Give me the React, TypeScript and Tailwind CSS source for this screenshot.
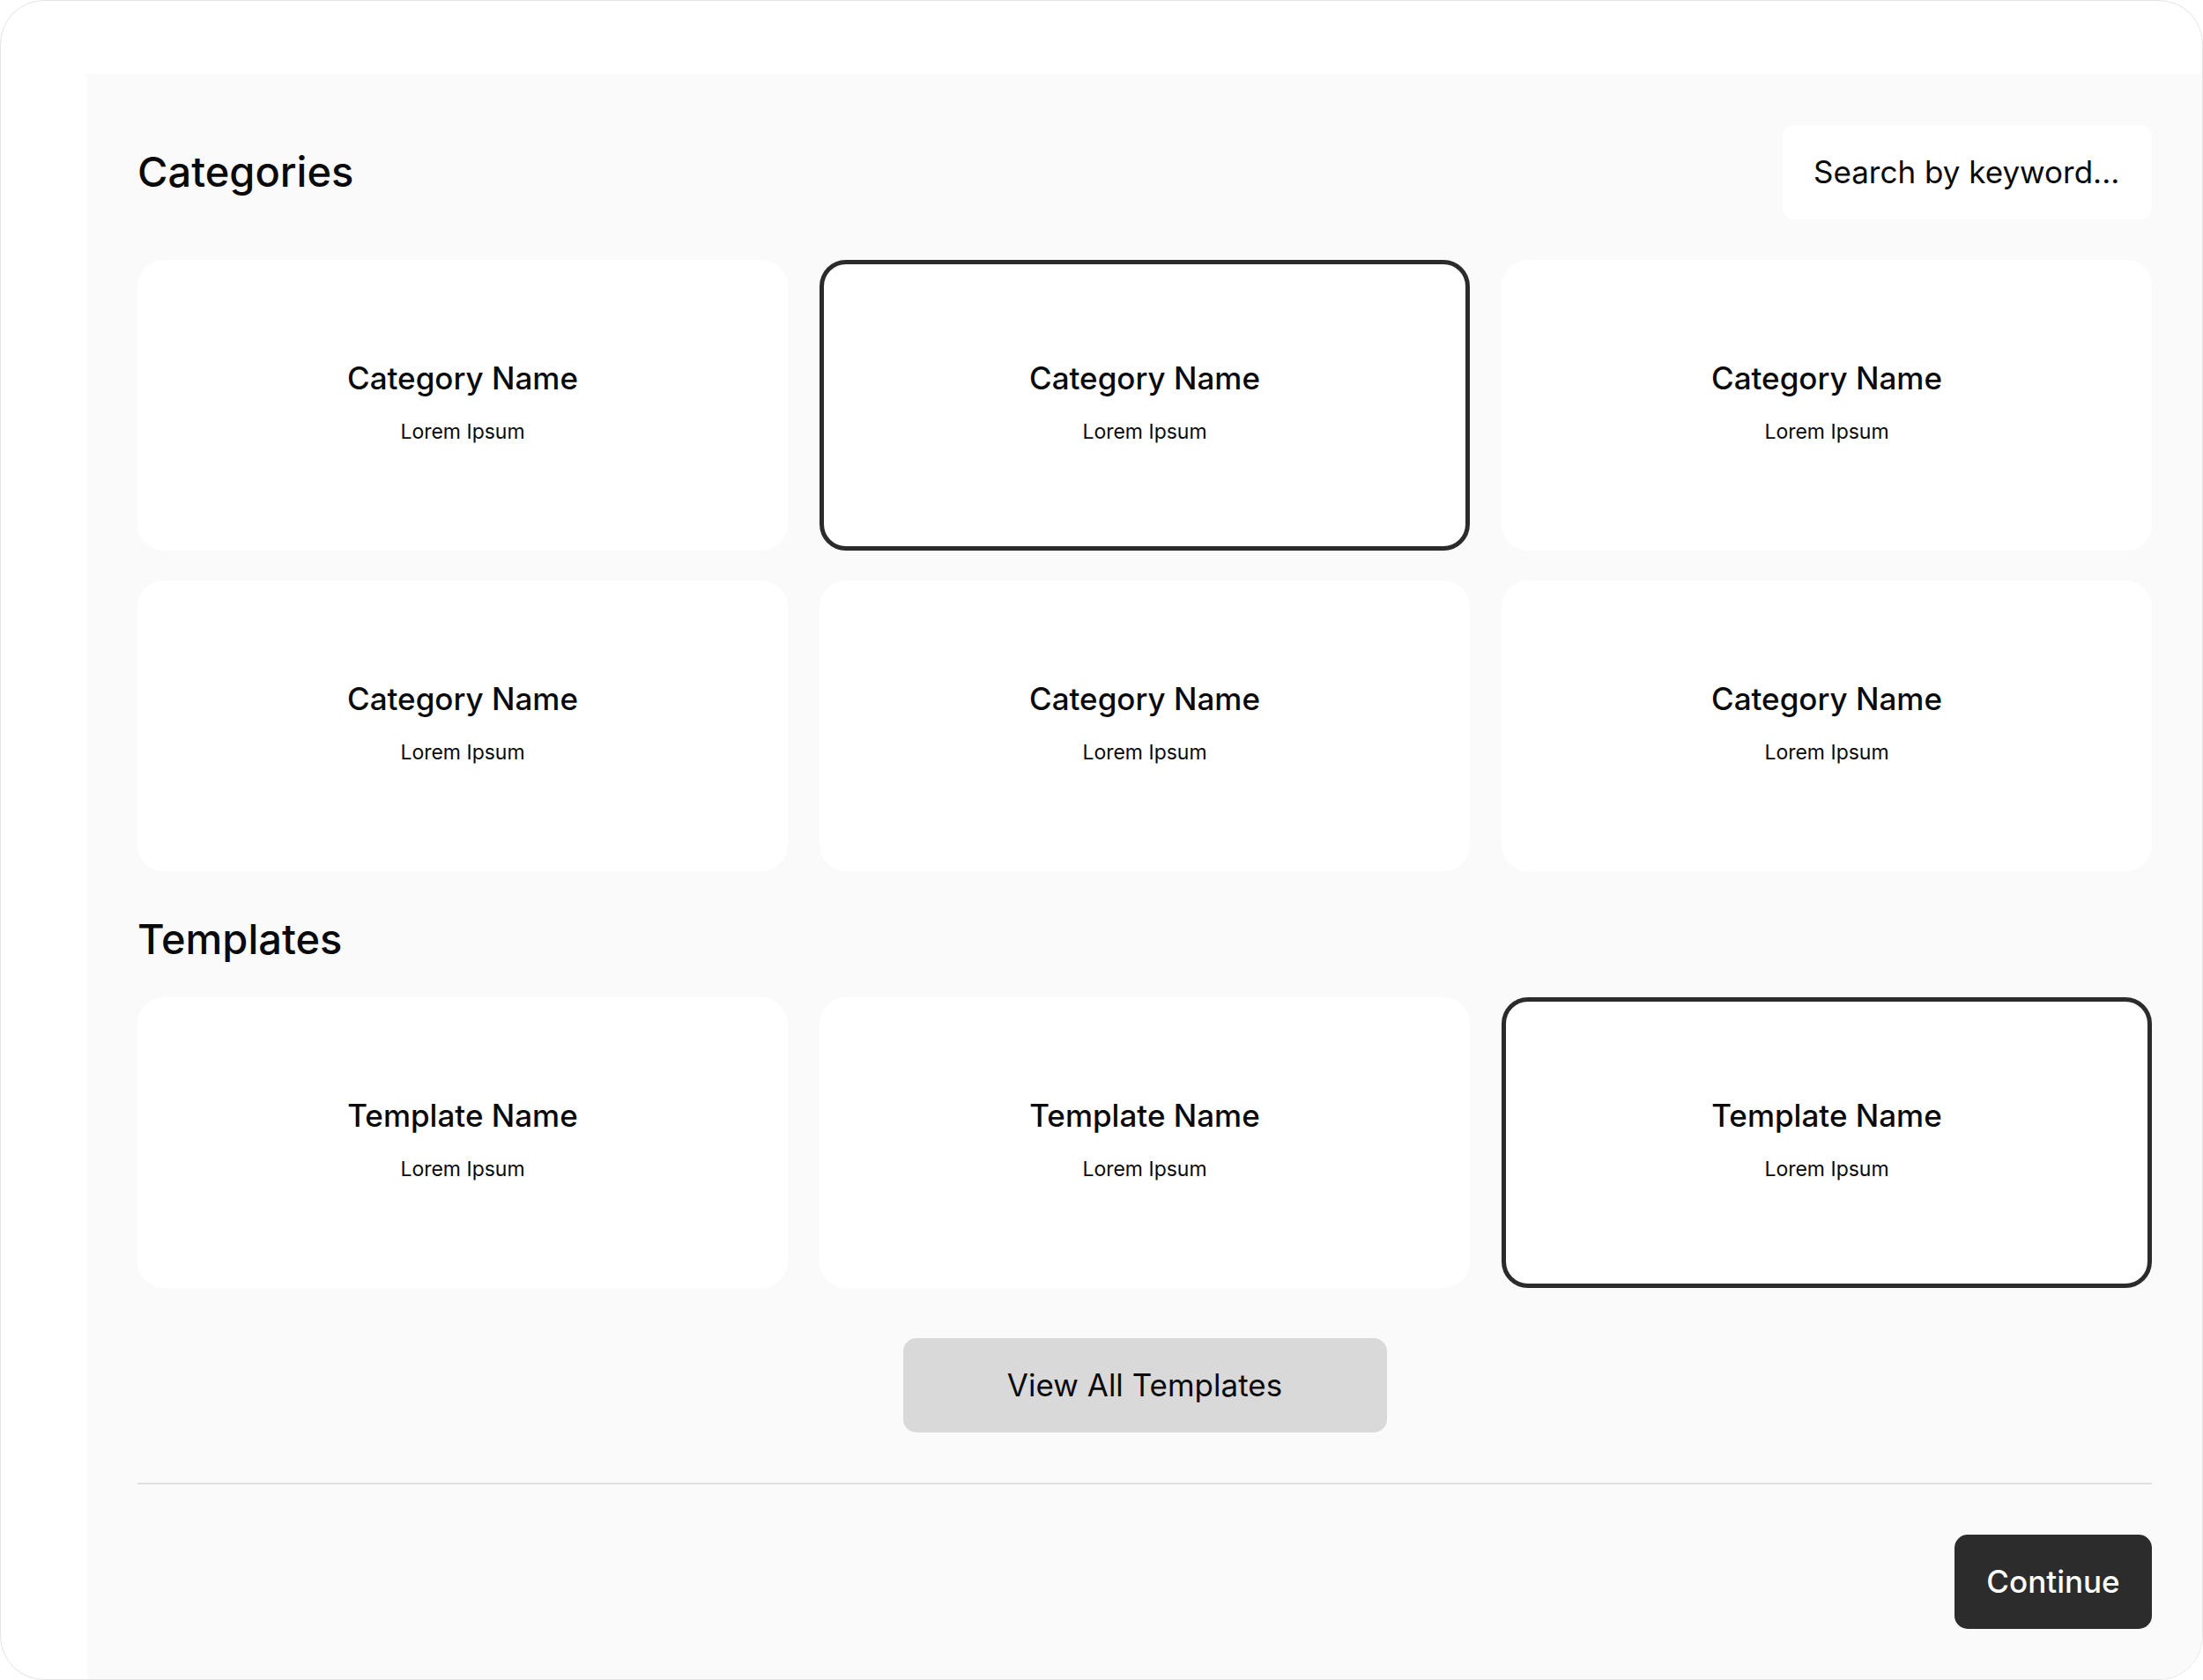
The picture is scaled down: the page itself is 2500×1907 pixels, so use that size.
import React from "react";

const font = { fontFamily: "Inter, 'Noto Sans', sans-serif" };

function Card({ title, selected }: { title: string; selected?: boolean }) {
  return (
    <div
      className={
        "h-[330px] rounded-[30px] bg-white flex flex-col items-center justify-center " +
        (selected ? "border-[5px] border-[#2b2b2b]" : "")
      }
    >
      <div className="text-[35px] leading-[42px] font-medium text-[#0a0a0a] -mt-[8px]">{title}</div>
      <div className="text-[23px] leading-[28px] text-[#0a0a0a] mt-[26px]">Lorem Ipsum</div>
    </div>
  );
}

export default function App() {
  return (
    <div
      style={font}
      className="w-[2500px] h-[1907px] rounded-[50px] border border-[#e3e3e3] bg-white overflow-hidden flex flex-col"
    >
      <div className="h-[83px] shrink-0" />
      <div className="flex flex-1 min-h-0">
        <div className="w-[98px] shrink-0" />
        <main className="flex-1 bg-[#fafafa] px-[57px] pt-[58px] flex flex-col">
          <div className="h-[107px] flex items-center justify-between">
            <h1 className="text-[47px] leading-[56px] font-medium text-[#0a0a0a] -mt-[2px]">Categories</h1>
            <div className="w-[419px] h-[107px] rounded-[13px] bg-white flex items-center pl-[35px] text-[35px] text-[#0a0a0a]">
              Search by keyword...
            </div>
          </div>

          <div className="mt-[46px] grid grid-cols-3 gap-x-[36px] gap-y-[34px]">
            <Card title="Category Name" />
            <Card title="Category Name" selected />
            <Card title="Category Name" />
            <Card title="Category Name" />
            <Card title="Category Name" />
            <Card title="Category Name" />
          </div>

          <h2 className="mt-[49px] text-[47px] leading-[56px] font-medium text-[#0a0a0a]">Templates</h2>

          <div className="mt-[38px] grid grid-cols-3 gap-x-[36px] gap-y-[34px]">
            <Card title="Template Name" />
            <Card title="Template Name" />
            <Card title="Template Name" selected />
          </div>

          <div className="mt-[57px] flex justify-center">
            <button className="w-[549px] h-[107px] rounded-[15px] bg-[#d9d9d9] text-[35px] text-[#0a0a0a] flex items-center justify-center">
              View All Templates
            </button>
          </div>

          <div className="mt-[57px] h-[2px] bg-[#e0e0e0]" />

          <div className="mt-[57px] flex justify-end">
            <button className="w-[224px] h-[107px] rounded-[15px] bg-[#2c2c2c] text-[35px] font-medium text-white flex items-center justify-center">
              Continue
            </button>
          </div>
        </main>
      </div>
    </div>
  );
}
